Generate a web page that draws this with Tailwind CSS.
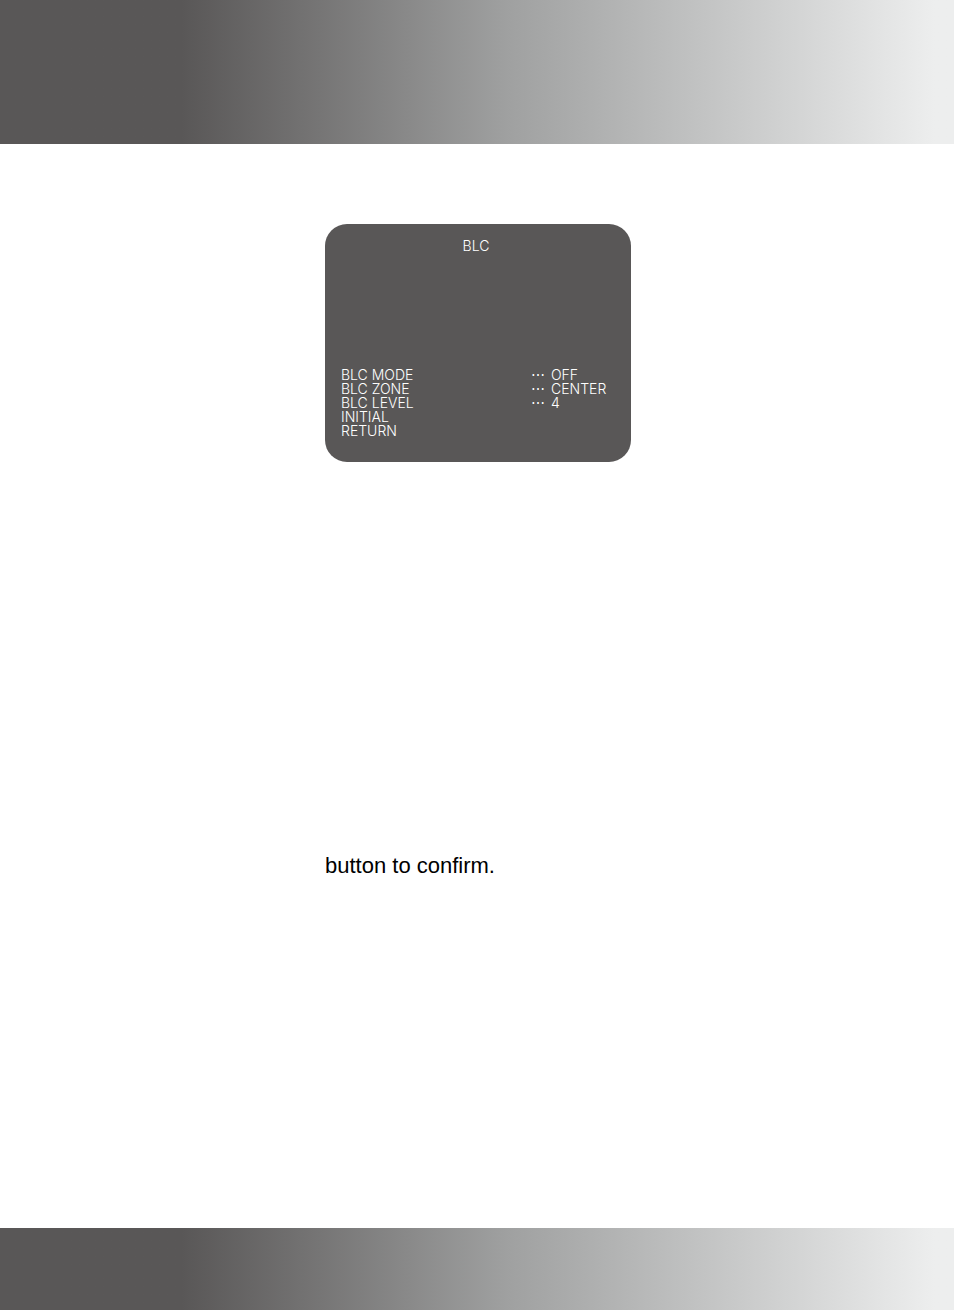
<!DOCTYPE html>
<html lang="en">
<head>
  <meta charset="UTF-8" />
  <meta name="viewport" content="width=device-width, initial-scale=1.0" />
  <title>BLC</title>
  <script src="https://cdn.jsdelivr.net/npm/@tailwindcss/browser@4"></script>
</head>
<body class="flex min-h-screen flex-col bg-white font-['Liberation_Sans',Arial,sans-serif] text-black">
  <header class="h-36 bg-linear-to-r from-[#595757] from-19% via-[#9fa0a0] via-53% to-[#edeeee] to-98%"></header>

  <main class="grow pt-20 pl-0.5">
    <div class="mx-auto w-[306px]">
      <!-- On-screen camera menu -->
      <section class="rounded-[22px] bg-[#595757] px-4 pt-3 pb-6 font-['Inter',sans-serif] text-sm font-light text-white">
        <h1 class="mb-28 pr-1 text-center">BLC</h1>
        <table class="w-full text-left leading-[14px]">
          <tbody>
            <tr><th scope="row" class="font-light">BLC MODE</th><td class="w-5">⋯</td><td class="w-16">OFF</td></tr>
            <tr><th scope="row" class="font-light">BLC ZONE</th><td>⋯</td><td>CENTER</td></tr>
            <tr><th scope="row" class="font-light">BLC LEVEL</th><td>⋯</td><td>4</td></tr>
            <tr><th scope="row" class="font-light">INITIAL</th><td></td><td></td></tr>
            <tr><th scope="row" class="font-light">RETURN</th><td></td><td></td></tr>
          </tbody>
        </table>
      </section>

      <p class="mt-[388px] text-[22px] leading-8">button to confirm.</p>
    </div>
  </main>

  <footer class="h-[82px] bg-linear-to-r from-[#595757] from-19% via-[#9fa0a0] via-53% to-[#edeeee] to-98%"></footer>
</body>
</html>
